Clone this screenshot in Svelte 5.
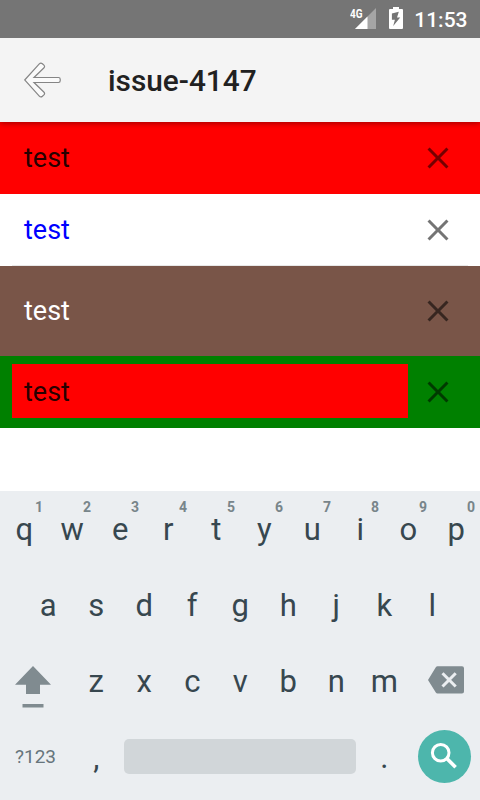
<script>
  const rows = [
    { bg: '#ff0000', color: 'rgba(0,0,0,.87)', height: 72 },
    { bg: '#ffffff', color: '#0000ff', height: 72, divider: true },
    { bg: '#795548', color: '#ffffff', height: 90 },
    { bg: '#008000', color: 'rgba(0,0,0,.87)', height: 72, inner: '#ff0000' }
  ];
  const top = 'qwertyuiop'.split('');
  const home = 'asdfghjkl'.split('');
  const bottom = 'zxcvbnm'.split('');
</script>

<div class="screen">
  <div class="status">
    <svg class="signal" width="28" height="24" viewBox="0 0 28 24">
      <path d="M26 2v21H5z" fill="#fff" opacity=".35" />
      <path d="M17.5 10.5V23H5z" fill="#fff" />
      <text x="0" y="11.5" textLength="12.5" lengthAdjust="spacingAndGlyphs">4G</text>
    </svg>
    <svg class="battery" width="14" height="22" viewBox="0 0 14 22">
      <path d="M4 0h6v2h3a1 1 0 0 1 1 1v18a1 1 0 0 1-1 1H1a1 1 0 0 1-1-1V3a1 1 0 0 1 1-1h3z" fill="#fff" />
      <path d="M9.8 4.8 2.9 6.6v6.200h3L4.200 18.900 11.200 10.500H8z" fill="#757575" />
    </svg>
    <span class="clock">11:53</span>
  </div>

  <header>
    <svg width="38" height="36" viewBox="0 0 38 36">
      <path d="M.7 18 15.300 1.900Q16.800.300 18.400 1.700L19.900 3.100Q21.300 4.500 19.800 6L10 15.500H34.500Q36.200 15.500 36.200 17.200V18.800Q36.200 20.500 34.500 20.500H10L19.800 30Q21.300 31.500 19.900 32.900L18.400 34.300Q16.800 35.700 15.300 34.100z" fill="#fafafa" stroke="#858585" stroke-width="1.2" />
    </svg>
    <h1>issue-4147</h1>
  </header>

  <main>
    {#each rows as row}
      <div class="row" class:divider={row.divider} style="background-color:{row.bg};color:{row.color};height:{row.height}px">
        <div class="field" style="background:{row.inner ?? 'transparent'}">test</div>
        <svg class="clear" width="36" height="36" viewBox="0 0 24 24">
          <path d="M19 6.41 17.59 5 12 10.59 6.41 5 5 6.41 10.59 12 5 17.59 6.41 19 12 13.41 17.59 19 19 17.59 13.41 12z" />
        </svg>
      </div>
    {/each}
  </main>

  <div class="keyboard">
    <div class="keys">
      {#each top as key, i}
        <div class="key">{key}<span class="hint">{(i + 1) % 10}</span></div>
      {/each}
    </div>
    <div class="keys">
      {#each home as key}<div class="key">{key}</div>{/each}
    </div>
    <div class="keys">
      <div class="wide shift">
        <svg width="36" height="42" viewBox="0 0 36 42">
          <path d="M18 0 36 18.7H25V28H11V18.7H0zM7.5 38h21v3.5h-21z" fill="#808b90" />
        </svg>
      </div>
      {#each bottom as key}<div class="key">{key}</div>{/each}
      <div class="wide delete">
        <svg width="36" height="28" viewBox="0 0 36 28">
          <path d="M9.500 .3H34a2 2 0 0 1 2 2V25.500a2 2 0 0 1-2 2H9.500Q8.500 27.500 7.800 26.500L0 14 7.800 1.300Q8.500 .3 9.500 .3z" fill="#808b90" />
          <path d="m14.500 7.300 13.200 13.200m0-13.200-13.200 13.200" stroke="#ebeef1" stroke-width="3" />
        </svg>
      </div>
    </div>
    <div class="keys last">
      <div class="symbols">?123</div>
      <div class="key">,</div>
      <div class="space"></div>
      <div class="key">.</div>
      <div class="search">
        <svg width="53" height="53" viewBox="0 0 53 53">
          <circle cx="22.700" cy="22.700" r="8.300" fill="none" stroke="#fff" stroke-width="3" />
          <path d="m28.600 28.300 9 9" stroke="#fff" stroke-width="3.600" />
        </svg>
      </div>
    </div>
  </div>
</div>

<style>
  .screen {
    width: 480px;
    height: 800px;
    display: flex;
    flex-direction: column;
    background: #fff;
    font-family: Roboto, sans-serif;
    overflow: hidden;
  }
  .status {
    height: 38px;
    flex: none;
    box-sizing: border-box;
    padding-right: 12.5px;
    display: flex;
    justify-content: flex-end;
    align-items: flex-start;
    background: #757575;
    color: #fff;
    position: relative;
    z-index: 2;
  }
  .signal { margin: 6px 11px 0 0; }
  .signal text { font: 700 12px Roboto, sans-serif; fill: #fff; }
  .battery { margin: 7px 11px 0 0; }
  .clock { font-size: 21px; font-weight: 500; line-height: 40px; }
  header {
    height: 84px;
    flex: none;
    box-sizing: border-box;
    padding-left: 24px;
    display: flex;
    align-items: center;
    gap: 46px;
    background: #f4f4f4;
    color: #212121;
    position: relative;
    z-index: 1;
    box-shadow: 0 1px 6px rgba(0, 0, 0, .4);
  }
  h1 { margin: 0; font-size: 29.8px; font-weight: 500; line-height: 36px; padding-top: 2px; }
  main { flex: 1; }
  .row {
    box-sizing: border-box;
    padding: 0 24px 0 12px;
    display: flex;
    align-items: center;
    justify-content: space-between;
  }
  .divider {
    background-image: linear-gradient(#e8e8e8, #e8e8e8);
    background-size: 456px 1px;
    background-position: 12px 71px;
    background-repeat: no-repeat;
  }
  .field {
    width: 384px;
    height: 54px;
    padding-left: 12px;
    font-size: 27px;
    line-height: 56px;
    margin-bottom: 2px;
  }
  .clear { fill: #000; opacity: .54; }
  .keyboard { height: 309px; flex: none; background: #ebeef1; color: #37474f; }
  .keys { height: 76px; display: flex; justify-content: center; }
  .key {
    position: relative;
    box-sizing: border-box;
    width: 48px;
    padding-left: .5px;
    text-align: center;
    font-size: 31px;
    line-height: 77px;
  }
  .hint {
    position: absolute;
    top: 8px;
    right: 5px;
    font-size: 14px;
    font-weight: 700;
    line-height: 17px;
    color: #78858a;
  }
  .wide { width: 72px; display: flex; box-sizing: border-box; }
  .shift { padding: 23px 0 0 15px; }
  .delete { padding: 23px 0 0 20px; }
  .last { justify-content: flex-start; align-items: flex-start; }
  .symbols { width: 71px; margin-right: 1px; text-align: center; font-size: 19px; line-height: 75px; color: #66757c; }
  .space { width: 232px; height: 35px; margin: 20px 4px 0; border-radius: 5px; background: #d1d6d9; }
  .search { width: 53px; height: 53px; margin: 11px 0 0 10px; border-radius: 50%; background: #4db6ac; }
</style>
